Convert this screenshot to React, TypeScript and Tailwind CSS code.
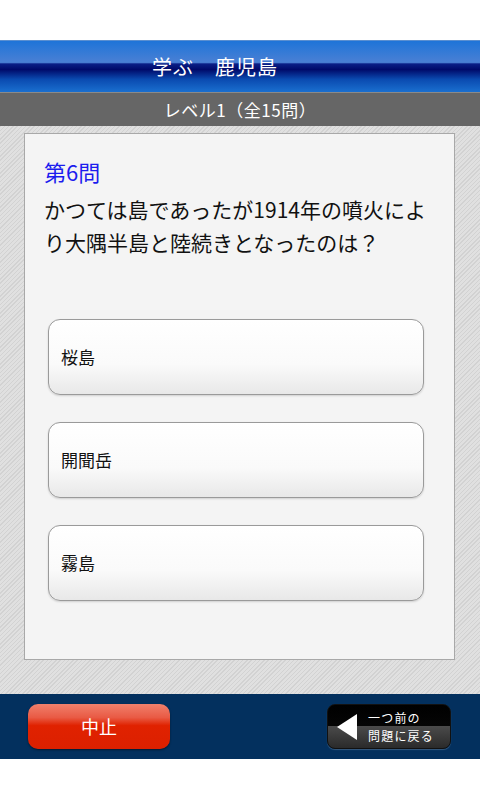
import React from 'react';

const choices = ['桜島', '開聞岳', '霧島'];

const App: React.FC = () => {
  return (
    <div className="w-[480px] h-[800px] bg-white flex flex-col font-['Noto_Sans_CJK_JP','Noto_Sans',sans-serif]">
      {/* status bar area */}
      <div className="h-[40px] bg-white" />

      {/* Title bar */}
      <div className="h-[52px] bg-[linear-gradient(to_bottom,#1e74d8_0%,#4a80d4_42%,#0a1f86_45%,#000a6a_56%,#0a4ab0_75%,#1a6fcf_100%)] border-t border-[#5a8fd0] flex items-center pl-[152px]">
        <span className="text-white text-[20px] leading-none tracking-[1px]">学ぶ　鹿児島</span>
      </div>

      {/* Level bar */}
      <div className="h-[34px] bg-[#666666] border-t border-[#8a8a8a] flex items-center justify-center">
        <span className="text-white text-[17px] leading-none tracking-[0.5px]">レベル1（全15問）</span>
      </div>

      {/* Main area */}
      <div className="h-[568px] bg-[#d9d9d9] bg-[repeating-linear-gradient(135deg,#d2d2d2_0px,#d2d2d2_1px,#e0e0e0_1px,#e0e0e0_3px)] pt-[7px] px-[24px]">
        <div className="h-[527px] w-[431px] bg-[#f4f4f4] border border-[#a8a8a8] px-[19px] pt-[22px]">
          <div className="text-[#1c1cee] text-[22px] leading-[30px]">第6問</div>
          <p className="text-[#111] text-[21px] leading-[33px] mt-[7px] whitespace-nowrap">
            かつては島であったが1914年の噴火によ<br />り大隅半島と陸続きとなったのは？
          </p>

          <div className="mt-[60px] flex flex-col gap-[27px] pl-[4px]">
            {choices.map((c) => (
              <button
                key={c}
                className="w-[376px] h-[76px] rounded-[12px] border border-[#9a9a9a] bg-[linear-gradient(to_bottom,#ffffff_0%,#fafafa_60%,#e8e8e8_100%)] shadow-[0_1px_2px_rgba(0,0,0,0.15)] text-left pl-[12px] text-[17px] text-[#111]"
              >
                {c}
              </button>
            ))}
          </div>
        </div>
      </div>

      {/* Footer */}
      <div className="h-[65px] bg-[#03305e] flex items-center justify-between pl-[28px] pr-[29px]">
        <button className="w-[142px] h-[45px] rounded-[10px] bg-[linear-gradient(to_bottom,#f0806c_0%,#e95a44_30%,#e02200_48%,#dc2000_100%)] shadow-[0_1px_2px_rgba(0,0,0,0.5)] text-white text-[18px]">
          中止
        </button>
        <button className="w-[124px] h-[45px] rounded-[8px] border border-[#111] bg-[linear-gradient(to_bottom,#000000_0%,#050505_48%,#4a4a4a_50%,#2a2a2a_100%)] flex items-center pl-[9px] gap-[11px] shadow-[0_1px_1px_rgba(255,255,255,0.2)]">
          <svg width="20" height="26" viewBox="0 0 20 26" className="shrink-0">
            <polygon points="20,0 20,26 0,13" fill="#ffffff" />
          </svg>
          <div className="flex flex-col text-white text-[12px] leading-[18px] tracking-[1.2px] text-left whitespace-nowrap">
            <span>一つ前の</span>
            <span>問題に戻る</span>
          </div>
        </button>
      </div>

      <div className="flex-1 bg-white" />
    </div>
  );
};

export default App;
